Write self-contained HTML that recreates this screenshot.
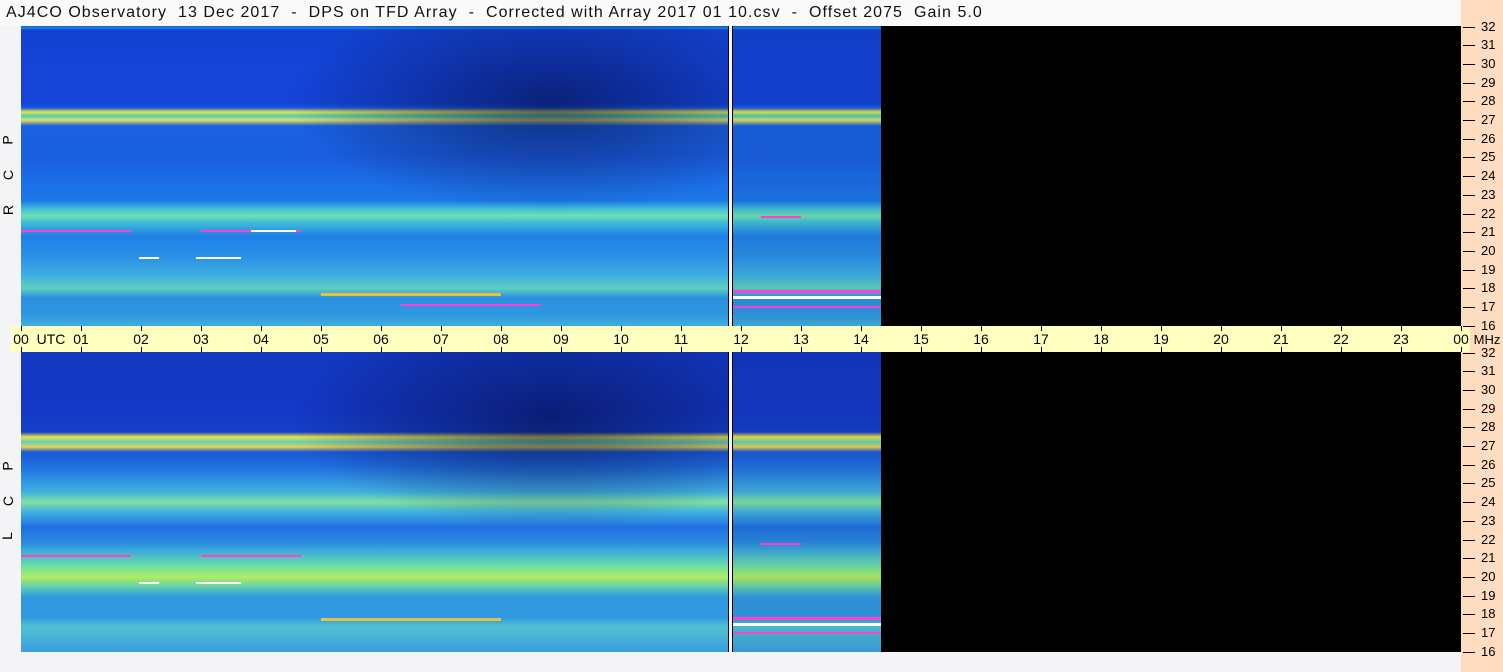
<!DOCTYPE html><html><head><meta charset="utf-8"><style>
*{margin:0;padding:0;box-sizing:border-box}
body{width:1503px;height:672px;background:#f4f4f6;position:relative;overflow:hidden;font-family:"Liberation Sans",sans-serif}
.a{position:absolute}
#title{left:6px;top:4px;font-size:16px;color:#111;white-space:pre;letter-spacing:1.05px}
#titlebar{left:0;top:0;width:1461px;height:26px;background:#fafafa}
.plot{left:21px;width:1440px;height:300px;background:#000}
.d1{background:linear-gradient(180deg,#1a50d8 0,#1d8ae0 2px,#1242d0 4px,#1444d8 40px,#1444d8 78px,#1a60e0 82px,#f0e040 86px,#40d0c0 90px,#e8e060 94px,#1a60e0 100px,#1a5ee0 130px,#1c70e8 160px,#1d78e8 175px,#40c0d8 183px,#70e0b0 190px,#40c0d8 196px,#2080e8 210px,#2a90e8 230px,#40b0e0 250px,#60d0c0 262px,#2a90e0 272px,#3098e0 290px,#40b0d8 300px)}
.d2{background:linear-gradient(180deg,#1238c0 0,#1438c8 60px,#1440c8 80px,#f0e040 85px,#60d0c0 90px,#e8d050 95px,#1a58d8 100px,#2070e0 115px,#40b0e0 140px,#80e0a0 150px,#40b0e0 160px,#2070e0 175px,#2a88e0 190px,#40b0d8 200px,#70e0a0 215px,#b0ec60 225px,#60d0b0 235px,#3098e0 245px,#3098e0 265px,#50c0d0 275px,#3a9ee0 300px)}
.dark{background:radial-gradient(ellipse 260px 110px at 75% 25%,rgba(5,10,60,.6),rgba(5,10,60,0))}
.s{position:absolute;height:2px}
.band{left:11px;top:326px;width:1459px;height:26px;background:#ffffc0}
.rp{left:1461px;top:0;width:42px;height:672px;background:#fddcc0}
.ht{position:absolute;font-size:14px;color:#000;top:5px;transform:translateX(-50%)}
.tk{position:absolute;width:1px;height:5px;background:#000}
.ml{position:absolute;left:1481px;font-size:13px;color:#000}
.mt{position:absolute;left:1463px;width:12px;height:1px;background:#000}
.side{position:absolute;left:3px;font-size:14px;color:#000;transform:rotate(-90deg)}
</style></head><body>
<div class="a" id="titlebar"></div>
<div class="a" id="title">AJ4CO Observatory  13 Dec 2017  -  DPS on TFD Array  -  Corrected with Array 2017 01 10.csv  -  Offset 2075  Gain 5.0</div>
<div class="a rp"></div>

<div class="a plot" style="top:26px">
 <div class="a d1" style="left:0;top:0;width:707px;height:300px"></div>
 <div class="a dark" style="left:0;top:0;width:707px;height:300px"></div>
 <div class="a" style="left:708px;top:0;width:3px;height:300px;background:#f0f8ff"></div>
 <div class="a" style="left:711px;top:0;width:1px;height:300px;background:#000"></div>
 <div class="a d1" style="left:712px;top:0;width:148px;height:300px;opacity:.95"></div>
 <div class="s" style="left:0;top:204px;width:110px;background:#ff40d0"></div>
 <div class="s" style="left:180px;top:204px;width:100px;background:#ff40d0"></div>
 <div class="s" style="left:230px;top:204px;width:45px;background:#fff"></div>
 <div class="s" style="left:118px;top:231px;width:20px;background:#fff"></div>
 <div class="s" style="left:175px;top:231px;width:45px;background:#fff"></div>
 <div class="s" style="left:300px;top:267px;width:180px;background:#e8c040;height:3px"></div>
 <div class="s" style="left:380px;top:278px;width:140px;background:#ff40d0"></div>
 <div class="s" style="left:740px;top:190px;width:40px;background:#ff40d0"></div>
 <div class="s" style="left:712px;top:264px;width:148px;background:#ff40d0;height:3px"></div>
 <div class="s" style="left:712px;top:270px;width:148px;background:#fff;height:3px"></div>
 <div class="s" style="left:712px;top:280px;width:148px;background:#ff40d0"></div>
</div>

<div class="a band"></div>
<div class="a" style="left:0;top:326px;width:1503px;height:26px">
<div class="tk" style="left:21px;top:0"></div><div class="tk" style="left:21px;top:21px"></div>
<div class="ht" style="left:21px">00</div><div class="ht" style="left:51px">UTC</div>
<div class="tk" style="left:81px;top:0"></div><div class="tk" style="left:81px;top:21px"></div><div class="ht" style="left:81px">01</div>
<div class="tk" style="left:141px;top:0"></div><div class="tk" style="left:141px;top:21px"></div><div class="ht" style="left:141px">02</div>
<div class="tk" style="left:201px;top:0"></div><div class="tk" style="left:201px;top:21px"></div><div class="ht" style="left:201px">03</div>
<div class="tk" style="left:261px;top:0"></div><div class="tk" style="left:261px;top:21px"></div><div class="ht" style="left:261px">04</div>
<div class="tk" style="left:321px;top:0"></div><div class="tk" style="left:321px;top:21px"></div><div class="ht" style="left:321px">05</div>
<div class="tk" style="left:381px;top:0"></div><div class="tk" style="left:381px;top:21px"></div><div class="ht" style="left:381px">06</div>
<div class="tk" style="left:441px;top:0"></div><div class="tk" style="left:441px;top:21px"></div><div class="ht" style="left:441px">07</div>
<div class="tk" style="left:501px;top:0"></div><div class="tk" style="left:501px;top:21px"></div><div class="ht" style="left:501px">08</div>
<div class="tk" style="left:561px;top:0"></div><div class="tk" style="left:561px;top:21px"></div><div class="ht" style="left:561px">09</div>
<div class="tk" style="left:621px;top:0"></div><div class="tk" style="left:621px;top:21px"></div><div class="ht" style="left:621px">10</div>
<div class="tk" style="left:681px;top:0"></div><div class="tk" style="left:681px;top:21px"></div><div class="ht" style="left:681px">11</div>
<div class="tk" style="left:741px;top:0"></div><div class="tk" style="left:741px;top:21px"></div><div class="ht" style="left:741px">12</div>
<div class="tk" style="left:801px;top:0"></div><div class="tk" style="left:801px;top:21px"></div><div class="ht" style="left:801px">13</div>
<div class="tk" style="left:861px;top:0"></div><div class="tk" style="left:861px;top:21px"></div><div class="ht" style="left:861px">14</div>
<div class="tk" style="left:921px;top:0"></div><div class="tk" style="left:921px;top:21px"></div><div class="ht" style="left:921px">15</div>
<div class="tk" style="left:981px;top:0"></div><div class="tk" style="left:981px;top:21px"></div><div class="ht" style="left:981px">16</div>
<div class="tk" style="left:1041px;top:0"></div><div class="tk" style="left:1041px;top:21px"></div><div class="ht" style="left:1041px">17</div>
<div class="tk" style="left:1101px;top:0"></div><div class="tk" style="left:1101px;top:21px"></div><div class="ht" style="left:1101px">18</div>
<div class="tk" style="left:1161px;top:0"></div><div class="tk" style="left:1161px;top:21px"></div><div class="ht" style="left:1161px">19</div>
<div class="tk" style="left:1221px;top:0"></div><div class="tk" style="left:1221px;top:21px"></div><div class="ht" style="left:1221px">20</div>
<div class="tk" style="left:1281px;top:0"></div><div class="tk" style="left:1281px;top:21px"></div><div class="ht" style="left:1281px">21</div>
<div class="tk" style="left:1341px;top:0"></div><div class="tk" style="left:1341px;top:21px"></div><div class="ht" style="left:1341px">22</div>
<div class="tk" style="left:1401px;top:0"></div><div class="tk" style="left:1401px;top:21px"></div><div class="ht" style="left:1401px">23</div>
<div class="tk" style="left:1461px;top:0"></div><div class="tk" style="left:1461px;top:21px"></div><div class="ht" style="left:1461px">00</div>
<div class="ht" style="left:1487px;font-size:13px;top:6px">MHz</div>
</div>

<div class="a plot" style="top:352px">
 <div class="a d2" style="left:0;top:0;width:707px;height:300px"></div>
 <div class="a dark" style="left:0;top:0;width:707px;height:260px"></div>
 <div class="a" style="left:708px;top:0;width:3px;height:300px;background:#f0f8ff"></div>
 <div class="a" style="left:711px;top:0;width:1px;height:300px;background:#000"></div>
 <div class="a d2" style="left:712px;top:0;width:148px;height:300px;opacity:.95"></div>
 <div class="s" style="left:0;top:203px;width:110px;background:#ff40d0"></div>
 <div class="s" style="left:180px;top:203px;width:100px;background:#ff40d0"></div>
 <div class="s" style="left:118px;top:230px;width:20px;background:#fff"></div>
 <div class="s" style="left:175px;top:230px;width:45px;background:#fff"></div>
 <div class="s" style="left:300px;top:266px;width:180px;background:#e8c040;height:3px"></div>
 <div class="s" style="left:740px;top:191px;width:40px;background:#ff40d0"></div>
 <div class="s" style="left:712px;top:265px;width:148px;background:#ff40d0;height:3px"></div>
 <div class="s" style="left:712px;top:271px;width:148px;background:#fff;height:3px"></div>
 <div class="s" style="left:712px;top:280px;width:148px;background:#ff40d0"></div>
</div>

<div class="side" style="top:132px">P</div>
<div class="side" style="top:167px">C</div>
<div class="side" style="top:202px">R</div>
<div class="side" style="top:458px">P</div>
<div class="side" style="top:493px">C</div>
<div class="side" style="top:528px">L</div>

<div class="a" style="left:0;top:0">
<div class="mt" style="top:27px"></div><div class="ml" style="top:19px">32</div>
<div class="mt" style="top:45px"></div><div class="ml" style="top:37px">31</div>
<div class="mt" style="top:64px"></div><div class="ml" style="top:56px">30</div>
<div class="mt" style="top:83px"></div><div class="ml" style="top:75px">29</div>
<div class="mt" style="top:101px"></div><div class="ml" style="top:93px">28</div>
<div class="mt" style="top:120px"></div><div class="ml" style="top:112px">27</div>
<div class="mt" style="top:139px"></div><div class="ml" style="top:131px">26</div>
<div class="mt" style="top:157px"></div><div class="ml" style="top:149px">25</div>
<div class="mt" style="top:176px"></div><div class="ml" style="top:168px">24</div>
<div class="mt" style="top:195px"></div><div class="ml" style="top:187px">23</div>
<div class="mt" style="top:214px"></div><div class="ml" style="top:206px">22</div>
<div class="mt" style="top:232px"></div><div class="ml" style="top:224px">21</div>
<div class="mt" style="top:251px"></div><div class="ml" style="top:243px">20</div>
<div class="mt" style="top:270px"></div><div class="ml" style="top:262px">19</div>
<div class="mt" style="top:288px"></div><div class="ml" style="top:280px">18</div>
<div class="mt" style="top:307px"></div><div class="ml" style="top:299px">17</div>
<div class="mt" style="top:326px"></div><div class="ml" style="top:318px">16</div>
<div class="mt" style="top:353px"></div><div class="ml" style="top:345px">32</div>
<div class="mt" style="top:371px"></div><div class="ml" style="top:363px">31</div>
<div class="mt" style="top:390px"></div><div class="ml" style="top:382px">30</div>
<div class="mt" style="top:409px"></div><div class="ml" style="top:401px">29</div>
<div class="mt" style="top:427px"></div><div class="ml" style="top:419px">28</div>
<div class="mt" style="top:446px"></div><div class="ml" style="top:438px">27</div>
<div class="mt" style="top:465px"></div><div class="ml" style="top:457px">26</div>
<div class="mt" style="top:483px"></div><div class="ml" style="top:475px">25</div>
<div class="mt" style="top:502px"></div><div class="ml" style="top:494px">24</div>
<div class="mt" style="top:521px"></div><div class="ml" style="top:513px">23</div>
<div class="mt" style="top:540px"></div><div class="ml" style="top:532px">22</div>
<div class="mt" style="top:558px"></div><div class="ml" style="top:550px">21</div>
<div class="mt" style="top:577px"></div><div class="ml" style="top:569px">20</div>
<div class="mt" style="top:596px"></div><div class="ml" style="top:588px">19</div>
<div class="mt" style="top:614px"></div><div class="ml" style="top:606px">18</div>
<div class="mt" style="top:633px"></div><div class="ml" style="top:625px">17</div>
<div class="mt" style="top:652px"></div><div class="ml" style="top:644px">16</div>
</div>
</body></html>
